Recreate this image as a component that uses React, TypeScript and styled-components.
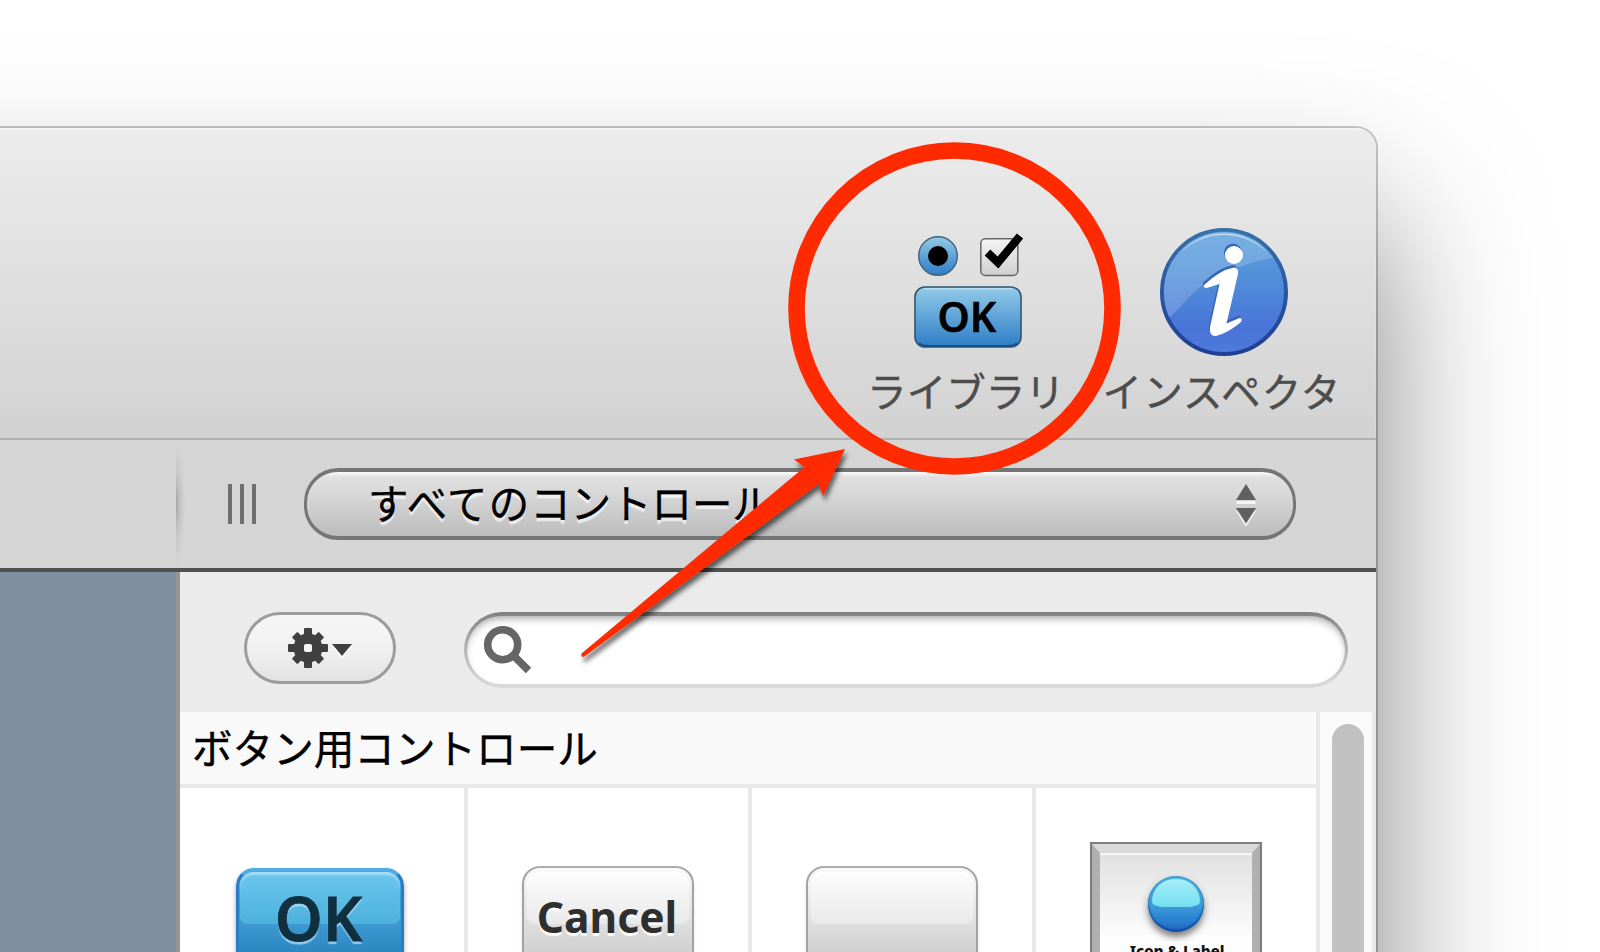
import React from "react";
import styled, { createGlobalStyle } from "styled-components";

const Global = createGlobalStyle`
  * { box-sizing: border-box; }
  html, body { margin: 0; padding: 0; background: #fff; overflow: hidden; }
`;

const jp = `"Noto Sans CJK JP", sans-serif`;
const latin = `"Noto Sans", "Open Sans", sans-serif`;

const Page = styled.main`
  position: relative;
  width: 1600px;
  height: 952px;
  padding-top: 128px;
  overflow: hidden;
  background: #fff;
  font-family: ${jp};
`;

/* The window continues past the left and bottom edges of the page. */
const Window = styled.div`
  width: 1776px;
  height: 1400px;
  margin-left: -400px;
  padding-left: 400px;
  border-radius: 20px;
  background: #ebebeb;
  box-shadow: 0 0 0 2px rgba(0, 0, 0, 0.22), 0 90px 155px rgba(0, 0, 0, 0.5);
  overflow: hidden;
  display: flex;
  flex-direction: column;
`;

const Toolbar = styled.header`
  height: 312px;
  flex: none;
  display: flex;
  justify-content: flex-end;
  align-items: flex-end;
  gap: 35px;
  padding: 0 32px 20px 0;
  margin-left: -400px;
  border-bottom: 2px solid #b0b0b0;
  box-shadow: inset 0 2px 1px #f6f6f6;
  background: linear-gradient(#ececec, #d2d2d2);
`;

const Tool = styled.div<{ $width: number }>`
  width: ${(p) => p.$width}px;
  display: flex;
  flex-direction: column;
  align-items: center;
`;

const ToolIcon = styled.div<{ $below: number; $shift: number }>`
  margin: 0 0 ${(p) => p.$below}px ${(p) => p.$shift}px;
  svg { display: block; }
`;

const ToolLabel = styled.span<{ $tracking?: number }>`
  font-size: 39.6px;
  line-height: 56px;
  letter-spacing: ${(p) => p.$tracking ?? 0}px;
  color: #4c4c4c;
  -webkit-text-stroke: 0.4px #4c4c4c;
  white-space: nowrap;
`;

const OptionBar = styled.div`
  height: 132px;
  flex: none;
  display: flex;
  align-items: center;
  background: #d5d5d5;
  border-bottom: 4px solid #505050;
`;

const BarLead = styled.div`
  width: 176px;
  height: 100%;
`;

const BarEdge = styled.div`
  width: 10px;
  height: 100%;
  background: radial-gradient(ellipse 9px 62px at 0 50%, #a4a4a4, #c4c4c4 45%, #d5d5d5);
`;

const Grip = styled.div`
  display: flex;
  gap: 8px;
  margin-left: 42px;
  i { width: 4px; height: 40px; background: #6e6e6e; }
`;

const Popup = styled.div`
  width: 992px;
  height: 72px;
  margin-left: 48px;
  padding: 0 36px 0 61px;
  display: flex;
  align-items: center;
  justify-content: space-between;
  border: solid #757575;
  border-width: 4px 3px;
  border-radius: 34px;
  background: linear-gradient(#fdfdfd, #e0e0e0 8%, #dbdbdb 25%, #bcbcbc);
`;

const PopupText = styled.span`
  padding-bottom: 4px;
  font-size: 40.4px;
  line-height: 60px;
  color: #000;
  -webkit-text-stroke: 0.4px #000;
  text-shadow: 0 4px 1px rgba(255, 255, 255, 0.65);
`;

const Hiragana = styled.span`
  letter-spacing: 1.3px;
`;

const Body = styled.div`
  flex: 1;
  display: flex;
`;

const Canvas = styled.div`
  width: 180px;
  flex: none;
  background: #8090a2;
  border-right: 4px solid #969696;
`;

const Panel = styled.section`
  flex: 1;
  display: flex;
  flex-direction: column;
  background: #ebebeb;
`;

const FilterRow = styled.div`
  height: 140px;
  flex: none;
  display: flex;
  padding: 40px 0 0 64px;
`;

const ActionButton = styled.div`
  width: 152px;
  height: 72px;
  border: 3px solid #9c9c9c;
  border-radius: 36px;
  background: linear-gradient(#f6f6f6, #f0f0f0 55%, #e2e2e2);
  display: flex;
  align-items: center;
  justify-content: center;
`;

const SearchField = styled.div`
  width: 884px;
  height: 76px;
  margin-left: 68px;
  padding: 4px 3px 4px;
  border-radius: 38px;
  background: linear-gradient(#808080, #b0b0b0 45%, #dcdcdc);
`;

const SearchInner = styled.div`
  height: 68px;
  border-radius: 34px;
  padding: 9px 0 0 16px;
  background: #fff;
  box-shadow: inset 0 5px 8px -3px rgba(0, 0, 0, 0.38);
  svg { display: block; }
`;

const Library = styled.div`
  flex: 1;
  display: flex;
`;

const List = styled.div`
  width: 1136px;
  display: flex;
  flex-direction: column;
`;

const SectionTitle = styled.h2`
  height: 76px;
  margin: 0;
  padding-left: 12px;
  font-weight: 400;
  font-size: 40.6px;
  line-height: 70px;
  color: #000;
  -webkit-text-stroke: 0.4px #000;
  background: #f9f9f9;
  border-bottom: 4px solid #e9e9e9;
`;

const Grid = styled.div`
  flex: 1;
  display: grid;
  grid-template-columns: 284px 280px 280px 280px;
  column-gap: 4px;
  background: #e9e9e9;
`;

const Cell = styled.div<{ $top: number; $left: number }>`
  background: #fff;
  padding: ${(p) => p.$top}px 0 0 ${(p) => p.$left}px;
`;

const Push = styled.div<{ $primary?: boolean }>`
  width: ${(p) => (p.$primary ? 168 : 172)}px;
  height: 112px;
  padding: 4px 3px;
  border-radius: 18px;
  border: ${(p) => (p.$primary ? "3px solid #2a7cc6" : "2px solid #a2a2a2")};
  border-top-color: ${(p) => (p.$primary ? "#4fabe4" : "#acacac")};
  background: ${(p) =>
    p.$primary
      ? "linear-gradient(#4cabe2 0, #3c99d1 50%, #1f78b4)"
      : "linear-gradient(#fafafa 0, #dedede 52%, #c4c4c4)"};
  box-shadow: 0 3px 5px rgba(0, 0, 0, ${(p) => (p.$primary ? 0.35 : 0.08)});
`;

const Gloss = styled.div<{ $primary?: boolean }>`
  height: 52px;
  margin: ${(p) => (p.$primary ? "-3px -2px 0" : "0")};
  border-radius: 14px 14px 8px 8px;
  box-shadow: ${(p) => (p.$primary ? "inset 0 4px 2px -1px #a4dbf5" : "inset 0 2px 2px #fff")};
  background: ${(p) =>
    p.$primary ? "linear-gradient(#6dc6ee, #4bb2db)" : "linear-gradient(#fcfcfc, #e9e9e9)"};
`;

const Caption = styled.div<{ $primary?: boolean }>`
  position: relative;
  text-align: center;
  white-space: nowrap;
  font-family: ${latin};
  font-weight: ${(p) => (p.$primary ? 600 : 700)};
  line-height: 60px;
  font-size: ${(p) => (p.$primary ? 61 : 42.5)}px;
  margin: ${(p) => (p.$primary ? "-36px -8px 0 -11px" : "-37px -9px 0 -11px")};
  color: ${(p) => (p.$primary ? "#10303f" : "#2f2f2f")};
  -webkit-text-stroke: ${(p) => (p.$primary ? "0.8px #10303f" : "0")};
  text-shadow: 0 3px 1px ${(p) => (p.$primary ? "rgba(170,220,245,.8)" : "rgba(255,255,255,.9)")};
`;

const Bevel = styled.div`
  width: 172px;
  height: 160px;
  border: 2px solid #7e7e7e;
`;

const BevelInner = styled.div`
  height: 160px;
  border: solid;
  border-width: 9px 8px;
  border-color: #d9d9d9 #b0b0b0 #b0b0b0;
  background: linear-gradient(#e0e0e0, #fdfdfd 60%);
  box-shadow: inset 0 2px 0 #f4f4f4;
  display: flex;
  flex-direction: column;
  align-items: center;
  padding-top: 23px;
`;

const Orb = styled.div`
  width: 56px;
  height: 56px;
  flex: none;
  padding: 3px 4px;
  border-radius: 50%;
  background: linear-gradient(#49b4e0, #3f9fdb 50%, #2a80d0 80%, #1f62bd);
  box-shadow: inset 0 -2px 2px #0d46a6, inset 0 0 2px #1a68bd, 0 5px 7px rgba(0, 0, 0, 0.5);
  &::before {
    content: "";
    display: block;
    width: 48px;
    height: 28px;
    border-radius: 24px 24px 12px 12px / 24px 24px 6px 6px;
    background: linear-gradient(#a8eef8, #74dff0);
  }
`;

const OrbLabel = styled.span`
  margin: 8px 0 0 2px;
  font-family: ${latin};
  font-weight: 800;
  font-size: 15.4px;
  line-height: 24px;
  letter-spacing: -0.15px;
  white-space: nowrap;
  color: #111;
`;

const Scrollbar = styled.div`
  width: 60px;
  padding: 12px 8px 0 8px;
  background: #fafafa;
  border: solid #e9e9e9;
  border-width: 0 4px;
  display: flex;
  justify-content: flex-end;
`;

const Thumb = styled.div`
  width: 32px;
  height: 100%;
  border-radius: 16px;
  background: #c1c1c1;
`;

const Annotation = styled.svg`
  position: absolute;
  left: 0;
  top: 0;
`;

const LibraryIcon = () => (
  <svg width="112" height="118" viewBox="912 232 112 118">
    <defs>
      <linearGradient id="aqua" x1="0" y1="0" x2="0" y2="1">
        <stop offset="0" stopColor="#93cbe8" />
        <stop offset="1" stopColor="#2d7dc6" />
      </linearGradient>
      <linearGradient id="box" x1="0" y1="0" x2="0" y2="1">
        <stop offset="0" stopColor="#f4f4f4" />
        <stop offset="1" stopColor="#cfcfcf" />
      </linearGradient>
    </defs>
    <circle cx="938" cy="256" r="19.3" fill="url(#aqua)" stroke="#445f78" strokeWidth="1.4" />
    <circle cx="938" cy="256" r="10" fill="#000" />
    <rect x="980.8" y="238.8" width="37" height="36.6" rx="4.5" fill="url(#box)" stroke="#666" strokeWidth="1.5" />
    <path d="M987.5 252.5 L998 262.5 L1020 236" fill="none" stroke="#000" strokeWidth="8.2" />
    <rect x="915" y="287" width="106" height="60" rx="10" fill="url(#aqua)" stroke="#34546e" strokeWidth="1.6" />
    <path d="M924 288.8 H1012" stroke="#b7def1" strokeWidth="1.6" />
    <path d="M919 343.5 Q923 346 928 346 H1008 Q1013 346 1017 343.5" fill="none" stroke="#17527f" strokeWidth="2" />
    <text x="967" y="332" textAnchor="middle" fontFamily="Noto Sans, sans-serif" fontWeight="600" fontSize="41" fill="#000" stroke="#000" strokeWidth=".5">OK</text>
  </svg>
);

const markPath =
  "M1204 285 Q1220 270 1234 267.5 Q1239 268 1238 274 L1226.5 323.5 L1239.5 318 Q1243 318 1241 322 Q1228 333 1216 336 Q1209 336.5 1210 327 L1219.5 284 L1206.5 288 Q1203 288 1204 285Z";

const InspectorIcon = () => (
  <svg width="130" height="130" viewBox="1159 227 130 130">
    <defs>
      <linearGradient id="info" x1="0" y1="0" x2="0" y2="1">
        <stop offset="0" stopColor="#5aa0dc" />
        <stop offset=".35" stopColor="#5291d8" />
        <stop offset=".8" stopColor="#4974d8" />
        <stop offset="1" stopColor="#4e7bdc" />
      </linearGradient>
      <linearGradient id="rim" x1="0" y1="0" x2="0" y2="1">
        <stop offset="0" stopColor="#3470aa" />
        <stop offset="1" stopColor="#1f3e94" />
      </linearGradient>
      <clipPath id="disc"><circle cx="1224" cy="292" r="60.5" /></clipPath>
    </defs>
    <circle cx="1224" cy="292" r="62" fill="url(#info)" stroke="url(#rim)" strokeWidth="4" />
    <g clipPath="url(#disc)">
      <path d="M1155 330 Q1174 315 1192 294 Q1222 265 1290 255 V220 H1150Z" fill="#fff" opacity=".18" />
      <path d="M1181 252 A59 59 0 0 1 1267 252 A63 63 0 0 0 1181 252Z" fill="#d4e6f6" opacity=".8" />
    </g>
    <g fill="#3867b8" transform="translate(-1 -2.5)">
      <circle cx="1234" cy="255" r="9" />
      <path d={markPath} />
    </g>
    <g fill="#fff">
      <circle cx="1234" cy="255" r="9" />
      <path d={markPath} />
    </g>
  </svg>
);

const GearIcon = () => (
  <svg width="66" height="44" viewBox="287 626 66 44">
    <path d="M332 646.5 H352 L342 658.5Z" fill="#fff" />
    <g fill="#404040">
      <circle cx="308" cy="648" r="14.5" />
      {[0, 45, 90, 135].map((a) => (
        <rect key={a} x="304" y={a % 90 ? 629 : 628} width="8" height={a % 90 ? 38 : 40} rx="1" transform={`rotate(${a} 308 648)`} />
      ))}
      <path d="M332 644 H352 L342 656Z" />
    </g>
    <rect x="304" y="644" width="8" height="8" rx="2" fill="#f4f4f4" />
  </svg>
);

const SearchIcon = () => (
  <svg width="50" height="50" viewBox="483 625 50 50">
    <circle cx="502.7" cy="644.7" r="15" fill="none" stroke="#666" strokeWidth="7.6" />
    <path d="M513.5 655.5 L528.5 670.5" stroke="#666" strokeWidth="7.6" />
  </svg>
);

const Stepper = () => (
  <svg width="22" height="46" viewBox="1235 481 22 46">
    <path d="M1236.5 501 H1255.5 V504 H1236.5Z" fill="#f4f4f4" />
    <path d="M1236 511 H1256 L1246 527Z" fill="#f0f0f0" />
    <path d="M1246 484 L1256 500 H1236Z M1236 508 H1256 L1246 523.5Z" fill="#606060" />
  </svg>
);

export default function App() {
  return (
    <>
      <Global />
      <Page>
        <Window>
          <Toolbar>
            <Tool $width={198}>
              <ToolIcon $below={12} $shift={3}><LibraryIcon /></ToolIcon>
              <ToolLabel>ライブラリ</ToolLabel>
            </Tool>
            <Tool $width={244}>
              <ToolIcon $below={5} $shift={4}><InspectorIcon /></ToolIcon>
              <ToolLabel $tracking={1.1}>インスペクタ</ToolLabel>
            </Tool>
          </Toolbar>
          <OptionBar>
            <BarLead />
            <BarEdge />
            <Grip><i /><i /><i /></Grip>
            <Popup>
              <PopupText><Hiragana>すべての</Hiragana>コントロール</PopupText>
              <Stepper />
            </Popup>
          </OptionBar>
          <Body>
            <Canvas />
            <Panel>
              <FilterRow>
                <ActionButton><GearIcon /></ActionButton>
                <SearchField><SearchInner><SearchIcon /></SearchInner></SearchField>
              </FilterRow>
              <Library>
                <List>
                  <SectionTitle>ボタン用コントロール</SectionTitle>
                  <Grid>
                    <Cell $top={80} $left={56}>
                      <Push $primary>
                        <Gloss $primary />
                        <Caption $primary>OK</Caption>
                      </Push>
                    </Cell>
                    <Cell $top={78} $left={54}>
                      <Push>
                        <Gloss />
                        <Caption>Cancel</Caption>
                      </Push>
                    </Cell>
                    <Cell $top={78} $left={54}>
                      <Push><Gloss /></Push>
                    </Cell>
                    <Cell $top={54} $left={54}>
                      <Bevel>
                        <BevelInner>
                          <Orb />
                          <OrbLabel>Icon &amp; Label</OrbLabel>
                        </BevelInner>
                      </Bevel>
                    </Cell>
                  </Grid>
                </List>
                <Scrollbar><Thumb /></Scrollbar>
              </Library>
            </Panel>
          </Body>
        </Window>
        <Annotation width="1600" height="952" viewBox="0 0 1600 952">
          <defs>
            <filter id="drop" x="-10%" y="-10%" width="120%" height="125%">
              <feDropShadow dx="2" dy="5" stdDeviation="2.5" floodColor="#000" floodOpacity=".6" />
            </filter>
          </defs>
          <circle cx="954.5" cy="308.5" r="158" fill="none" stroke="#ff2a00" strokeWidth="16.6" />
          <path
            d="M845 449 L794 459.5 L804.5 467 L581.5 653.5 Q580.5 657 583.5 657 L818.5 484 L823 496Z"
            fill="#ff2a00"
            filter="url(#drop)"
          />
        </Annotation>
      </Page>
    </>
  );
}
